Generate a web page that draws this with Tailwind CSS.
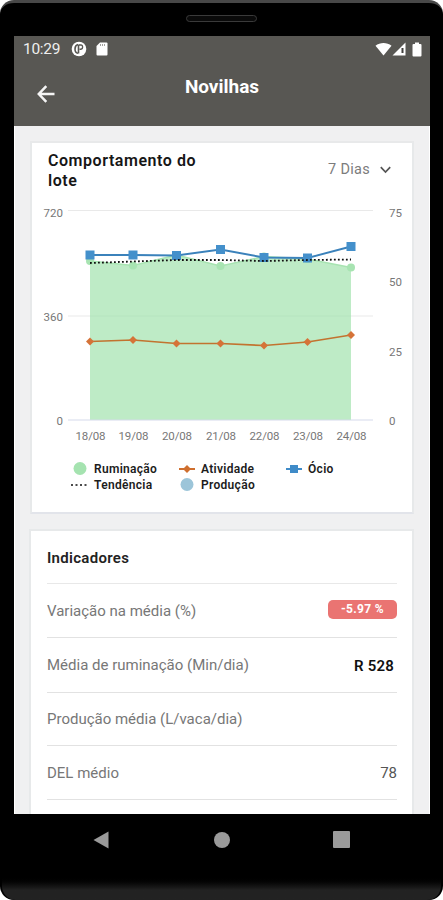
<!DOCTYPE html>
<html lang="pt-BR">
<head>
    <meta charset="UTF-8">
    <meta name="viewport" content="width=device-width, initial-scale=1.0">
    <title>Novilhas</title>
    <script src="https://cdn.jsdelivr.net/npm/@tailwindcss/browser@4"></script>
</head>
<body class="bg-white font-['Roboto',sans-serif]">
    <!-- Phone frame -->
    <div class="w-[443px] h-[900px] rounded-[14px] bg-black border-t-[3px] border-[#484848] overflow-hidden flex flex-col">
        <div class="h-[33px] shrink-0 flex justify-center pt-3">
            <div class="w-[71px] h-[7px] rounded-sm border border-[#3a3a3a] bg-[#0a0a0a]"></div>
        </div>

        <!-- Screen -->
        <div class="h-[778px] w-[416px] ml-[14px] shrink-0 overflow-hidden flex flex-col">
            <header class="h-[90px] shrink-0 bg-[#585753] text-white">
                <div class="h-[26px] flex items-center pl-[9px] pr-[8px]">
                    <span class="mt-[2px] text-[15.5px] leading-none tracking-[-0.3px] text-[#eeeeee]">10:29</span>
                    <svg class="ml-[11px] w-4 h-4" viewBox="0 0 16 16">
                        <circle cx="8" cy="8" r="7.300" fill="#fff"/>
                        <path d="M7 3.500C5 4 4 5.500 4 8s1.200 4 3 4.300" fill="none" stroke="#585753" stroke-width="1.600"/>
                        <path d="M7.500 3.500v9" stroke="#585753" stroke-width="1.600"/>
                        <path d="M8 4h2.200c1.700 0 2.200 3.800-.2 4.200H8.500" fill="none" stroke="#585753" stroke-width="1.400"/>
                    </svg>
                    <svg class="ml-[9px] w-3 h-[14px]" viewBox="0 0 12 14">
                        <path d="M4 .5h6.500a1 1 0 0 1 1 1v11a1 1 0 0 1-1 1h-9a1 1 0 0 1-1-1V4z" fill="#fff"/>
                        <path d="M4.500 2v2M6.500 2v2M8.500 2v2" stroke="#8a8985" stroke-width=".8"/>
                    </svg>
                    <svg class="ml-auto w-[17px] h-[14px]" viewBox="0 0 17 14">
                        <path d="M.5 3.800C5 0 12 0 16.500 3.800L8.500 13.500z" fill="#fff"/>
                    </svg>
                    <svg class="w-[14px] h-[14px]" viewBox="0 0 14 14">
                        <path d="M13.500.5v13H.5z" fill="#fff"/>
                        <path d="M9.500 6h2v5h-2z" fill="#403f3c"/>
                    </svg>
                    <svg class="ml-[6px] w-[10px] h-[15px]" viewBox="0 0 10 15">
                        <path d="M3 .5h4v1.500h1.500a1 1 0 0 1 1 1v10.500a1 1 0 0 1-1 1h-7a1 1 0 0 1-1-1V3a1 1 0 0 1 1-1H3z" fill="#fff"/>
                    </svg>
                </div>
                <div class="h-[64px] grid grid-cols-[1fr_auto_1fr] px-[23px]">
                    <svg class="w-[18px] h-[18px] mt-[23px]" viewBox="0 0 18 18" fill="none" stroke="#f5f5f5" stroke-width="2.500">
                        <path d="M17.500 9H2M9.300 1.200 1.800 9l7.500 7.800"/>
                    </svg>
                    <h1 class="mt-[13px] text-[19px] leading-6 font-bold">Novilhas</h1>
                </div>
            </header>

            <main class="grow bg-[#f0f0f1] border-x border-b-2 border-white px-4 pt-[15px]">
                <!-- Chart card -->
                <section class="h-[373px] -mx-px bg-white border-2 border-t-[#e8e9ea] border-x-[#e7e9ea] border-b-[#e2e4ea]">
                    <div class="h-[57px] flex justify-between pl-[16px] pr-[21px] pt-[8px]">
                        <h2 class="w-[165px] text-[16px] leading-5 font-semibold tracking-[0.55px] text-[#161616]">Comportamento do lote</h2>
                        <button class="h-[22px] mt-[8px] flex items-center gap-[10px] text-[14.500px] tracking-[0.3px] text-[#7c7c7c]">7 Dias
                            <svg class="w-[11px] h-[8px]" viewBox="0 0 11 8" fill="none" stroke="#555" stroke-width="1.700"><path d="M.8 1.200 5.500 6l4.700-4.800"/></svg>
                        </button>
                    </div>
                    <svg id="chart" class="w-[379px] h-[246px]" viewBox="32 200 379 246" font-size="11.500" fill="#777"></svg>
                    <ul class="mt-[15px] ml-[39px] grid grid-cols-[108px_107px_auto] auto-rows-[16px] items-center text-[12px] font-semibold text-[#1c1c1c] tracking-[0.300px]">
                        <li class="flex items-center gap-[7px]">
                            <svg class="w-4 h-4" viewBox="0 0 16 16"><circle cx="9" cy="7.500" r="6.500" fill="#a5e3b0"/></svg>Ruminação
                        </li>
                        <li class="flex items-center gap-[6px]">
                            <svg class="w-4 h-4" viewBox="0 0 16 16"><path d="M0 8h16" stroke="#cf6f2e" stroke-width="2"/><path d="M8 4l4 4-4 4-4-4z" fill="#cf6f2e"/></svg>Atividade
                        </li>
                        <li class="flex items-center gap-[6px]">
                            <svg class="w-4 h-4" viewBox="0 0 16 16"><path d="M0 8h16" stroke="#3f8bc8" stroke-width="2"/><path d="M4 4h8v8H4z" fill="#3f8bc8"/></svg>Ócio
                        </li>
                        <li class="flex items-center gap-[7px]">
                            <svg class="w-4 h-4" viewBox="0 0 16 16"><path d="M0 8h16" stroke="#111" stroke-width="1.500" stroke-dasharray="2 2.500"/></svg>Tendência
                        </li>
                        <li class="flex items-center gap-[6px]">
                            <svg class="w-4 h-4" viewBox="0 0 16 16"><circle cx="8" cy="7.500" r="6.500" fill="#9cc5d9"/></svg>Produção
                        </li>
                    </ul>
                </section>

                <!-- Indicators card -->
                <section class="mt-[15px] -ml-[2px] -mr-px h-[330px] bg-white border-2 border-[#e7e9ea] pl-[16px] pr-[15px] text-[15px] text-[#777]">
                    <h2 class="h-[53px] pt-[17px] leading-5 font-semibold tracking-[0.3px] text-[#222] border-b border-[#e8e8e8]">Indicadores</h2>
                    <div class="h-[54px] flex items-center justify-between border-b border-[#e2e2e2]">
                        <span class="mt-px">Variação na média (%)</span>
                        <span class="w-[69px] h-[19px] -mt-[3px] rounded-[5px] bg-[#ea7472] text-center text-[12px] leading-[19px] font-bold tracking-[0.300px] text-white">-5.97 %</span>
                    </div>
                    <div class="h-[55px] flex items-center justify-between border-b border-[#e2e2e2]">
                        <span>Média de ruminação (Min/dia)</span>
                        <span class="mt-[3px] mr-[3px] text-[15px] font-semibold tracking-[0.2px] text-[#111]">R 528</span>
                    </div>
                    <div class="h-[53px] flex items-center justify-between border-b border-[#e2e2e2]">
                        <span>Produção média (L/vaca/dia)</span>
                    </div>
                    <div class="h-[54px] flex items-center justify-between border-b border-[#e2e2e2]">
                        <span class="mt-px">DEL médio</span>
                        <span class="mt-px text-[#555]">78</span>
                    </div>
                </section>
            </main>
        </div>

        <!-- Android navigation -->
        <nav class="h-[51px] shrink-0 flex items-center justify-between px-[93px]">
            <svg class="w-4 h-[18px]" viewBox="0 0 16 18"><path d="M15.500.5v17L.5 9z" fill="#9a9a9a"/></svg>
            <div class="w-4 h-4 ml-px rounded-full bg-[#9a9a9a]"></div>
            <div class="w-[17px] h-[17px] rounded-[1px] bg-[#9a9a9a]"></div>
        </nav>
        <div class="mt-[10px] grow mx-[2px] rounded-b-[14px] bg-linear-to-b from-black via-[#222] via-60% to-[#222]"></div>
    </div>

    <script>
        const xs = [90, 133, 176.5, 220.5, 264, 307.5, 351];
        const days = ['18/08', '19/08', '20/08', '21/08', '22/08', '23/08', '24/08'];
        const rumination = [261, 265.5, 255, 266, 256.5, 259, 267.5];
        const trend = [263, 261.5, 260, 260, 261, 260, 259.5];
        const activity = [341.5, 340, 343.5, 343.5, 345.5, 342, 335];
        const idle = [255, 255, 255.5, 249.5, 257.5, 258, 246.5];

        const points = ys => ys.map((y, i) => `${xs[i]},${y}`).join(' ');
        const label = (x, y, text, anchor, width) =>
            `<text x="${x}" y="${y}" text-anchor="${anchor}" textLength="${width}">${text}</text>`;

        let out = '';
        out += [210.5, 316].map(y => `<path d="M68 ${y}H373" stroke="#e9e9e9"/>`).join('');
        out += `<polygon points="90,420 ${points(rumination)} 351,420" fill="#beebc6"/>`;
        out += '<path d="M90 316H351" stroke="#b6e4bf"/><path d="M68 420H373" stroke="#d5daeb"/>';
        out += `<polyline points="${points(rumination)}" fill="none" stroke="#a8e4b2" stroke-width="1.5"/>`;
        out += rumination.map((y, i) => `<circle cx="${xs[i]}" cy="${y}" r="4" fill="#a8e4b2"/>`).join('');
        out += `<polyline points="${points(activity)}" fill="none" stroke="#c2732f" stroke-width="1.7"/>`;
        out += activity.map((y, i) => `<path d="M${xs[i]} ${y - 4}l4 4-4 4-4-4z" fill="#d57338"/>`).join('');
        out += `<polyline points="${points(idle)}" fill="none" stroke="#3b82bb" stroke-width="1.9"/>`;
        out += idle.map((y, i) => `<rect x="${xs[i] - 4.5}" y="${y - 4.5}" width="9" height="9" fill="#4490cb"/>`).join('');
        out += `<polyline points="${points(trend)}" fill="none" stroke="#111" stroke-width="1.8" stroke-dasharray="1.8 2.2"/>`;

        out += label(63, 217, '720', 'end', 19.5) + label(63, 320.5, '360', 'end', 19.5) + label(63, 425, '0', 'end', 6.5);
        out += label(389, 217, '75', 'start', 13) + label(389, 286, '50', 'start', 13);
        out += label(389, 355.5, '25', 'start', 13) + label(389, 425, '0', 'start', 6.5);
        out += days.map((d, i) => label(xs[i] + 0.5, 439.5, d, 'middle', 30)).join('');
        document.getElementById('chart').innerHTML = out;
    </script>
</body>
</html>
